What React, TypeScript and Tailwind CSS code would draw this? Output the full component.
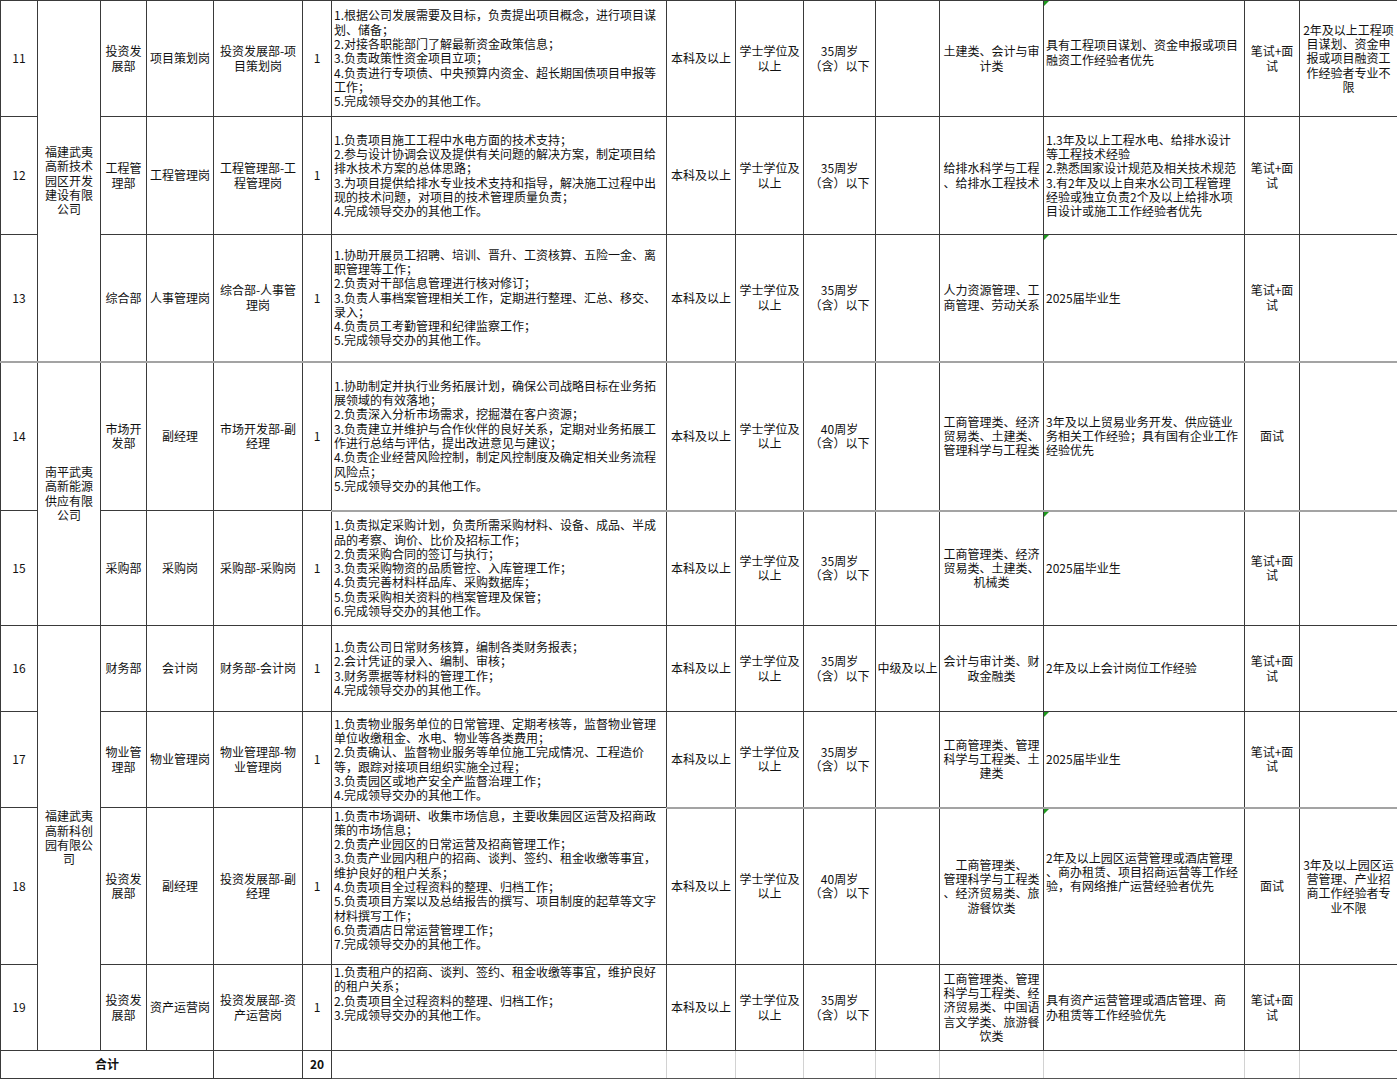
import React from "react"

const cols = [
  "w-[37px]", "w-[63px]", "w-[46px]", "w-[67px]", "w-[89px]", "w-[29px]", "w-[335px]", "w-[69px]",
  "w-[68px]", "w-[72px]", "w-[64px]", "w-[104px]", "w-[201px]", "w-[55px]", "w-[98px]",
]

type Row = {
  no: string
  h: string
  company?: { lines: string[]; span: number }
  dept: string[]
  post: string[]
  code: string[]
  duties: string[]
  dutyCls?: string
  age: string
  title?: string
  major: string[]
  other: string[]
  otherCls?: string
  exam: string[]
  note?: string[]
  mark?: boolean
  grayTop?: number
}

const written = ["笔试+面", "试"]
const oral = ["面试"]

const rows: Row[] = [
  {
    no: "11", h: "h-[116px]",
    company: { lines: ["福建武夷", "高新技术", "园区开发", "建设有限", "公司"], span: 3 },
    dept: ["投资发", "展部"], post: ["项目策划岗"], code: ["投资发展部-项", "目策划岗"],
    duties: [
      "1.根据公司发展需要及目标，负责提出项目概念，进行项目谋",
      "划、储备；",
      "2.对接各职能部门了解最新资金政策信息；",
      "3.负责政策性资金项目立项；",
      "4.负责进行专项债、中央预算内资金、超长期国债项目申报等",
      "工作；",
      "5.完成领导交办的其他工作。",
    ],
    age: "35", major: ["土建类、会计与审", "计类"],
    other: ["具有工程项目谋划、资金申报或项目", "融资工作经验者优先"], otherCls: "pb-[12px]",
    exam: written, note: ["2年及以上工程项", "目谋划、资金申", "报或项目融资工", "作经验者专业不", "限"], mark: true,
  },
  {
    no: "12", h: "h-[118px]",
    dept: ["工程管", "理部"], post: ["工程管理岗"], code: ["工程管理部-工", "程管理岗"],
    duties: [
      "1.负责项目施工工程中水电方面的技术支持；",
      "2.参与设计协调会议及提供有关问题的解决方案，制定项目给",
      "排水技术方案的总体思路；",
      "3.为项目提供给排水专业技术支持和指导，解决施工过程中出",
      "现的技术问题，对项目的技术管理质量负责；",
      "4.完成领导交办的其他工作。",
    ],
    age: "35", major: ["给排水科学与工程", "、给排水工程技术"],
    other: [
      "1.3年及以上工程水电、给排水设计",
      "等工程技术经验",
      "2.熟悉国家设计规范及相关技术规范",
      "3.有2年及以上自来水公司工程管理",
      "经验或独立负责2个及以上给排水项",
      "目设计或施工工作经验者优先",
    ],
    exam: written,
  },
  {
    no: "13", h: "h-[127px]",
    dept: ["综合部"], post: ["人事管理岗"], code: ["综合部-人事管", "理岗"],
    duties: [
      "1.协助开展员工招聘、培训、晋升、工资核算、五险一金、离",
      "职管理等工作；",
      "2.负责对干部信息管理进行核对修订；",
      "3.负责人事档案管理相关工作，定期进行整理、汇总、移交、",
      "录入；",
      "4.负责员工考勤管理和纪律监察工作；",
      "5.完成领导交办的其他工作。",
    ],
    age: "35", major: ["人力资源管理、工", "商管理、劳动关系"],
    other: ["2025届毕业生"], exam: written, mark: true,
  },
  {
    no: "14", h: "h-[149px]", grayTop: 0,
    company: { lines: ["南平武夷", "高新能源", "供应有限", "公司"], span: 2 },
    dept: ["市场开", "发部"], post: ["副经理"], code: ["市场开发部-副", "经理"],
    duties: [
      "1.协助制定并执行业务拓展计划，确保公司战略目标在业务拓",
      "展领域的有效落地；",
      "2.负责深入分析市场需求，挖掘潜在客户资源；",
      "3.负责建立并维护与合作伙伴的良好关系，定期对业务拓展工",
      "作进行总结与评估，提出改进意见与建议；",
      "4.负责企业经营风险控制，制定风控制度及确定相关业务流程",
      "风险点；",
      "5.完成领导交办的其他工作。",
    ],
    age: "40", major: ["工商管理类、经济", "贸易类、土建类、", "管理科学与工程类"],
    other: ["3年及以上贸易业务开发、供应链业", "务相关工作经验；具有国有企业工作", "经验优先"],
    exam: oral,
  },
  {
    no: "15", h: "h-[115px]", grayTop: 6,
    dept: ["采购部"], post: ["采购岗"], code: ["采购部-采购岗"],
    duties: [
      "1.负责拟定采购计划，负责所需采购材料、设备、成品、半成",
      "品的考察、询价、比价及招标工作；",
      "2.负责采购合同的签订与执行；",
      "3.负责采购物资的品质管控、入库管理工作；",
      "4.负责完善材料样品库、采购数据库；",
      "5.负责采购相关资料的档案管理及保管；",
      "6.完成领导交办的其他工作。",
    ],
    age: "35", major: ["工商管理类、经济", "贸易类、土建类、", "机械类"],
    other: ["2025届毕业生"], exam: written, mark: true,
  },
  {
    no: "16", h: "h-[86px]",
    company: { lines: ["福建武夷", "高新科创", "园有限公", "司"], span: 4 },
    dept: ["财务部"], post: ["会计岗"], code: ["财务部-会计岗"],
    duties: [
      "1.负责公司日常财务核算，编制各类财务报表；",
      "2.会计凭证的录入、编制、审核；",
      "3.财务票据等材料的管理工作；",
      "4.完成领导交办的其他工作。",
    ],
    age: "35", title: "中级及以上", major: ["会计与审计类、财", "政金融类"],
    other: ["2年及以上会计岗位工作经验"], exam: written,
  },
  {
    no: "17", h: "h-[96px]",
    dept: ["物业管", "理部"], post: ["物业管理岗"], code: ["物业管理部-物", "业管理岗"],
    duties: [
      "1.负责物业服务单位的日常管理、定期考核等，监督物业管理",
      "单位收缴租金、水电、物业等各类费用；",
      "2.负责确认、监督物业服务等单位施工完成情况、工程造价",
      "等，跟踪对接项目组织实施全过程；",
      "3.负责园区或地产安全产监督治理工作；",
      "4.完成领导交办的其他工作。",
    ],
    age: "35", major: ["工商管理类、管理", "科学与工程类、土", "建类"],
    other: ["2025届毕业生"], exam: written, mark: true,
  },
  {
    no: "18", h: "h-[157px]", grayTop: 7,
    dept: ["投资发", "展部"], post: ["副经理"], code: ["投资发展部-副", "经理"],
    duties: [
      "1.负责市场调研、收集市场信息，主要收集园区运营及招商政",
      "策的市场信息；",
      "2.负责产业园区的日常运营及招商管理工作；",
      "3.负责产业园内租户的招商、谈判、签约、租金收缴等事宜，",
      "维护良好的租户关系；",
      "4.负责项目全过程资料的整理、归档工作；",
      "5.负责项目方案以及总结报告的撰写、项目制度的起草等文字",
      "材料撰写工作；",
      "6.负责酒店日常运营管理工作；",
      "7.完成领导交办的其他工作。",
    ],
    dutyCls: "pb-[12px]",
    age: "40", major: ["工商管理类、", "管理科学与工程类", "、经济贸易类、旅", "游餐饮类"],
    other: ["2年及以上园区运营管理或酒店管理", "、商办租赁、项目招商运营等工作经", "验，有网络推广运营经验者优先"],
    otherCls: "pb-[28px]",
    exam: oral, note: ["3年及以上园区运", "营管理、产业招", "商工作经验者专", "业不限"], mark: true,
  },
  {
    no: "19", h: "h-[86px]",
    dept: ["投资发", "展部"], post: ["资产运营岗"], code: ["投资发展部-资", "产运营岗"],
    duties: [
      "1.负责租户的招商、谈判、签约、租金收缴等事宜，维护良好",
      "的租户关系；",
      "2.负责项目全过程资料的整理、归档工作；",
      "3.完成领导交办的其他工作。",
    ],
    dutyCls: "align-top",
    age: "35", major: ["工商管理类、管理", "科学与工程类、经", "济贸易类、中国语", "言文学类、旅游餐", "饮类"],
    other: ["具有资产运营管理或酒店管理、商", "办租赁等工作经验优先"], otherCls: "text-center",
    exam: written,
  },
]

const Lines = ({ lines }: { lines: string[] }) => (
  <>
    {lines.map((l, i) => (
      <div key={i} className="whitespace-nowrap">{l}</div>
    ))}
  </>
)

function Cell({
  lines = [],
  cls = "",
  gray = false,
  children,
  rowSpan,
}: {
  lines?: string[]
  cls?: string
  gray?: boolean
  children?: React.ReactNode
  rowSpan?: number
}) {
  return (
    <td
      rowSpan={rowSpan}
      className={`relative border border-[#3a3a3a] p-0 align-middle overflow-hidden ${
        gray ? "border-t-2 border-t-[#a3a3a3]" : ""
      } ${cls}`}
    >
      {children}
      <Lines lines={lines} />
    </td>
  )
}

export default function App() {
  return (
    <div className="w-[1397px] h-[1080px] overflow-hidden bg-white text-[#111] font-['Noto_Sans_CJK_SC','Noto_Sans',sans-serif] text-[12px] leading-[14.3px]">
      <table className="table-fixed border-collapse w-[1397px]">
        <colgroup>
          {cols.map((c, i) => (
            <col key={i} className={c} />
          ))}
        </colgroup>
        <tbody>
          {rows.map((r) => {
            const g = (i: number) => r.grayTop !== undefined && i >= r.grayTop
            return (
              <tr key={r.no} className={r.h}>
                <Cell lines={[r.no]} cls="text-center" gray={g(0)} />
                {r.company && (
                  <Cell lines={r.company.lines} rowSpan={r.company.span} cls="text-center" gray={g(1)} />
                )}
                <Cell lines={r.dept} cls="text-center" gray={g(2)} />
                <Cell lines={r.post} cls="text-center" gray={g(3)} />
                <Cell lines={r.code} cls="text-center" gray={g(4)} />
                <Cell lines={["1"]} cls="text-center" gray={g(5)} />
                <Cell lines={r.duties} cls={`text-left pl-[2px] ${r.dutyCls ?? ""}`} gray={g(6)} />
                <Cell lines={["本科及以上"]} cls="text-center" gray={g(7)} />
                <Cell lines={["学士学位及", "以上"]} cls="text-center" gray={g(8)} />
                <Cell lines={[`${r.age}周岁`, "（含）以下"]} cls="text-center" gray={g(9)} />
                <Cell lines={r.title ? [r.title] : []} cls="text-center" gray={g(10)} />
                <Cell lines={r.major} cls="text-center" gray={g(11)} />
                <Cell lines={r.other} cls={`text-left pl-[2px] ${r.otherCls ?? ""}`} gray={g(12)}>
                  {r.mark && (
                    <span className="absolute left-0 top-0 h-0 w-0 border-t-[5px] border-r-[5px] border-t-[#1f9a1f] border-r-transparent" />
                  )}
                </Cell>
                <Cell lines={r.exam} cls="text-center" gray={g(13)} />
                <Cell lines={r.note ?? []} cls="text-center" gray={g(14)} />
              </tr>
            )
          })}
          <tr className="h-[28px]">
            <td colSpan={4} className="border border-[#3a3a3a] text-center font-bold">合计</td>
            <td className="border border-[#3a3a3a]" />
            <td className="border border-[#3a3a3a] text-center font-bold">20</td>
            {Array.from({ length: 9 }).map((_, i) => (
              <td key={i} className="border border-[#d2d2d2] border-b-[#555]" />
            ))}
          </tr>
        </tbody>
      </table>
    </div>
  )
}
